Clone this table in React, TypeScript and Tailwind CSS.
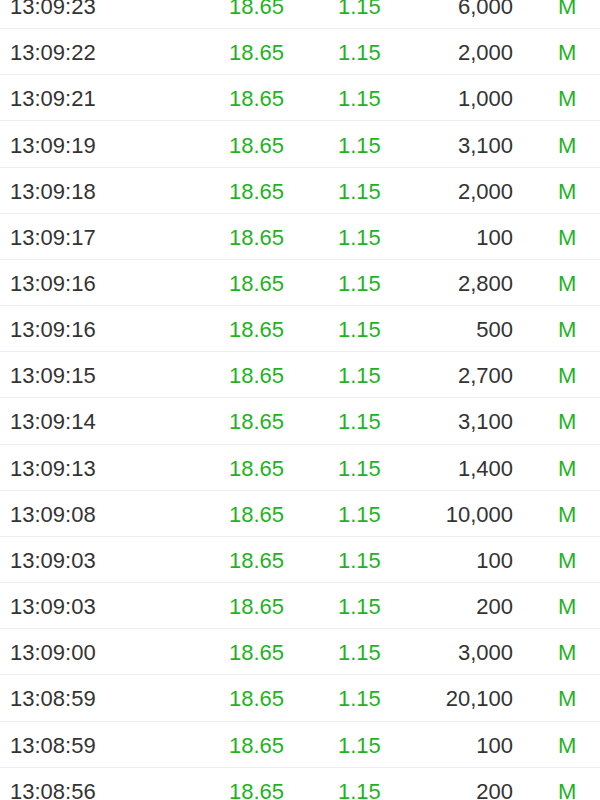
const trades: [string, string][] = [
  ['13:09:23', '6,000'],
  ['13:09:22', '2,000'],
  ['13:09:21', '1,000'],
  ['13:09:19', '3,100'],
  ['13:09:18', '2,000'],
  ['13:09:17', '100'],
  ['13:09:16', '2,800'],
  ['13:09:16', '500'],
  ['13:09:15', '2,700'],
  ['13:09:14', '3,100'],
  ['13:09:13', '1,400'],
  ['13:09:08', '10,000'],
  ['13:09:03', '100'],
  ['13:09:03', '200'],
  ['13:09:00', '3,000'],
  ['13:08:59', '20,100'],
  ['13:08:59', '100'],
  ['13:08:56', '200'],
]

export default function App() {
  return (
    <div className="h-[800px] w-[600px] overflow-hidden bg-white font-['Liberation_Sans',Arial,sans-serif] text-[22px]">
      <div className="-mt-[17px]">
        {trades.map(([time, vol], i) => (
          <div key={i} className="flex h-[46.16px] items-center border-b border-[#efefef] pl-[10px] pt-[2px]">
            <span className="w-[174px] text-[#333333]">{time}</span>
            <span className="w-[100px] text-right text-[#1fb31f]">18.65</span>
            <span className="w-[100px] pl-[54px] text-[#1fb31f]">1.15</span>
            <span className="w-[129px] text-right text-[#333333]">{vol}</span>
            <span className="pl-[45px] text-[#1fb31f]">M</span>
          </div>
        ))}
      </div>
    </div>
  )
}
